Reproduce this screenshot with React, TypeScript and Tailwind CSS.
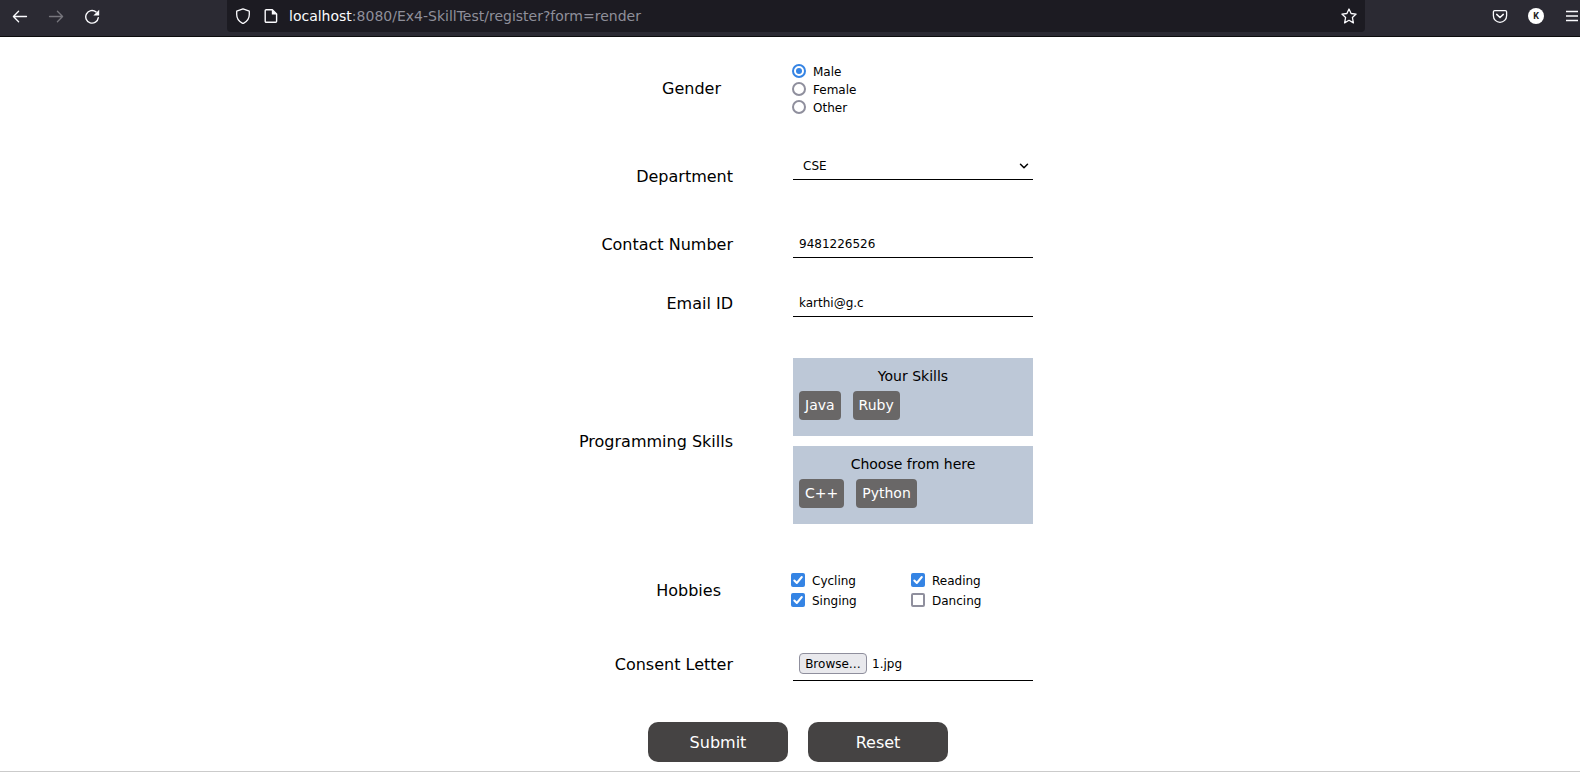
import React from "react";

function BrowserBar() {
  return (
    <header className="flex h-[37px] border-b border-[#0c0c0d] bg-[#2b2a33] text-[#fbfbfe]">
      <div className="flex h-8 w-[227px] shrink-0 items-center gap-5 pl-3">
        <svg width="16" height="16" viewBox="0 0 16 16" fill="none" stroke="currentColor" strokeWidth="1.3" strokeLinecap="round" strokeLinejoin="round">
          <path d="M14.5 8.5h-13M6.6 3.3 1.4 8.5l5.2 5.2" />
        </svg>
        <svg className="text-[#77767d]" width="16" height="16" viewBox="0 0 16 16" fill="none" stroke="currentColor" strokeWidth="1.3" strokeLinecap="round" strokeLinejoin="round">
          <path d="M1.5 8.5h13M9.4 3.3l5.2 5.2-5.2 5.2" />
        </svg>
        <svg width="16" height="16" viewBox="0 0 16 16" fill="none" stroke="currentColor" strokeWidth="1.4" strokeLinecap="round">
          <path d="M12 3.900A6.300 6.300 0 1 0 14.300 9.600" />
          <path d="M15.200 1.800v5.200a.6.6 0 0 1-.6.6H9.400z" fill="currentColor" stroke="none" />
        </svg>
      </div>
      <div className="flex h-8 w-[1138px] shrink-0 items-center rounded-b-[4px] bg-[#1c1b22] pl-2">
        <svg width="16" height="16" viewBox="0 0 16 16" fill="none" stroke="currentColor" strokeWidth="1.3" strokeLinejoin="round">
          <path d="M8 .9 14.3 3.2v3.4c0 3.800-1.700 6.600-5.500 8.500a1.800 1.800 0 0 1-1.600 0C3.400 13.200 1.700 10.400 1.700 6.600V3.200z" />
        </svg>
        <svg className="ml-3" width="16" height="16" viewBox="0 0 16 16" fill="none" stroke="currentColor" strokeWidth="1.4" strokeLinejoin="round">
          <path d="M3.200 1.700h6.100l4.300 4.200v7.400a1 1 0 0 1-1 1H3.200a1 1 0 0 1-1-1V2.700a1 1 0 0 1 1-1z" />
          <path d="M8.800 1.500v5h5z" fill="currentColor" stroke="none" />
        </svg>
        <span className="ml-[10px] text-[14px] leading-[18px] text-[#8f8f9a]">
          <span className="text-[#fbfbfe]">localhost</span>:8080/Ex4-SkillTest/register?form=render
        </span>
        <svg className="mr-2 ml-auto" width="16" height="16" viewBox="0 0 16 16" fill="none" stroke="currentColor" strokeWidth="1.3" strokeLinejoin="round">
          <path d="m8 1 2.100 4.500 5 .6-3.700 3.400 1 5.400L8 12.300l-4.400 2.600 1-5.400L.9 6.100l5-.6z" />
        </svg>
      </div>
      <div className="flex h-8 flex-1 items-center overflow-hidden pl-[127px]">
        <svg className="shrink-0" width="16" height="16" viewBox="0 0 16 16" fill="none" stroke="currentColor" strokeWidth="1.3" strokeLinecap="round" strokeLinejoin="round">
          <path d="M2.700 2.600h10.600a1.300 1.300 0 0 1 1.300 1.300v3.800a6.600 6.600 0 0 1-13.200 0V3.900a1.300 1.300 0 0 1 1.300-1.300z" />
          <path d="m4.700 6.400 3.300 3.100 3.300-3.100" strokeWidth="1.500" />
        </svg>
        <span className="ml-5 flex size-4 shrink-0 items-center justify-center rounded-full bg-white font-['Roboto',sans-serif] text-[9px] leading-none font-bold text-[#1c1b22]">K</span>
        <svg className="ml-[22px] shrink-0" width="12" height="12" viewBox="0 0 12 12" stroke="currentColor" strokeWidth="1.400">
          <path d="M0 1.500h12M0 6h12M0 10.500h12" />
        </svg>
      </div>
    </header>
  );
}

type RowProps = { label: string; row: string; labelBox: string; children: React.ReactNode };

function Row({ label, row, labelBox, children }: RowProps) {
  return (
    <div className={`flex ${row}`}>
      <div className={`w-[793px] shrink-0 text-right text-[16px] leading-[19px] ${labelBox}`}>{label}</div>
      <div className="w-60 text-[12px] leading-[14px]">{children}</div>
    </div>
  );
}

function Radio({ label, checked = false }: { label: string; checked?: boolean }) {
  return (
    <div className="-ml-px flex h-[18px] items-center">
      <span className={`flex size-[14px] items-center justify-center rounded-full border-2 ${checked ? "border-[#3584e4]" : "border-[#8f8f9d]"}`}>
        {checked && <span className="size-[6px] rounded-full bg-[#3584e4]" />}
      </span>
      <span className="ml-[7px] pt-px">{label}</span>
    </div>
  );
}

function Check({ label, checked = false }: { label: string; checked?: boolean }) {
  return (
    <div className="flex h-5 w-[120px] items-center">
      {checked ? (
        <svg className="rounded-[2px] bg-[#3584e4]" width="14" height="14" viewBox="0 0 14 14" fill="none" stroke="#fff" strokeWidth="2" strokeLinecap="round" strokeLinejoin="round">
          <path d="m3.300 7.500 2.500 2.500 5-6" />
        </svg>
      ) : (
        <span className="size-[14px] rounded-[2px] border-2 border-[#8f8f9d]" />
      )}
      <span className="ml-[7px] pt-px">{label}</span>
    </div>
  );
}

function SkillBox({ title, skills }: { title: string; skills: string[] }) {
  return (
    <div className="h-[78px] bg-[#bdc8d7] px-[6px] pt-[10px] text-[14px] leading-[17px]">
      <div className="text-center">{title}</div>
      <div className="mt-[6px] flex gap-3">
        {skills.map((s) => (
          <span key={s} className="h-[29px] rounded-[4px] bg-[#696767] px-[6px] pt-[6px] text-white">{s}</span>
        ))}
      </div>
    </div>
  );
}

export default function App() {
  return (
    <div className="flex h-[772px] w-[1580px] flex-col overflow-hidden border-b border-[#cbcbcb] bg-white font-['DejaVu_Sans',sans-serif] text-black">
      <BrowserBar />
      <main className="flex-1">
        <Row label="Gender" row="h-[100px]" labelBox="pt-[42px] pr-[72px]">
          <div className="pt-[25px]">
            <Radio label="Male" checked />
            <Radio label="Female" />
            <Radio label="Other" />
          </div>
        </Row>
        <Row label="Department" row="h-[80px]" labelBox="pt-[30px] pr-[60px]">
          <div className="flex h-[43px] items-end justify-between border-b border-black pr-1 pb-[6px] pl-[10px]">
            <span>CSE</span>
            <svg className="mb-[3px]" width="10" height="8" viewBox="0 0 10 8" fill="none" stroke="currentColor" strokeWidth="1.500" strokeLinecap="round" strokeLinejoin="round">
              <path d="m1.500 2.300 3.500 3.500 3.500-3.500" />
            </svg>
          </div>
        </Row>
        <Row label="Contact Number" row="h-[60px]" labelBox="pt-[18px] pr-[60px]">
          <div className="flex h-[41px] items-end border-b border-black pb-[6px] pl-[6px]">9481226526</div>
        </Row>
        <Row label="Email ID" row="h-[81px]" labelBox="pt-[17px] pr-[60px]">
          <div className="flex h-[40px] items-end border-b border-black pb-[6px] pl-[6px]">karthi@g.c</div>
        </Row>
        <Row label="Programming Skills" row="h-[192px]" labelBox="pt-[74px] pr-[60px]">
          <div className="flex flex-col gap-[10px]">
            <SkillBox title="Your Skills" skills={["Java", "Ruby"]} />
            <SkillBox title="Choose from here" skills={["C++", "Python"]} />
          </div>
        </Row>
        <Row label="Hobbies" row="h-[80px]" labelBox="pt-[31px] pr-[72px]">
          <div className="-ml-[2px] flex flex-wrap pt-[20px]">
            <Check label="Cycling" checked />
            <Check label="Reading" checked />
            <Check label="Singing" checked />
            <Check label="Dancing" />
          </div>
        </Row>
        <Row label="Consent Letter" row="h-[92px]" labelBox="pt-[25px] pr-[60px]">
          <div className="flex h-[51px] items-end border-b border-black pb-[6px] pl-[6px]">
            <span className="h-[21px] w-[68px] rounded-[4px] border border-[#8f8f9d] bg-[#e9e9ed] pt-[3px] text-center">Browse…</span>
            <span className="ml-[5px] pb-[3px]">1.jpg</span>
          </div>
        </Row>
        <div className="flex gap-5 pl-[648px] text-[16px] leading-[19px] text-white">
          <button className="h-10 w-[140px] rounded-[10px] bg-[#454343]">Submit</button>
          <button className="h-10 w-[140px] rounded-[10px] bg-[#454343]">Reset</button>
        </div>
      </main>
    </div>
  );
}
